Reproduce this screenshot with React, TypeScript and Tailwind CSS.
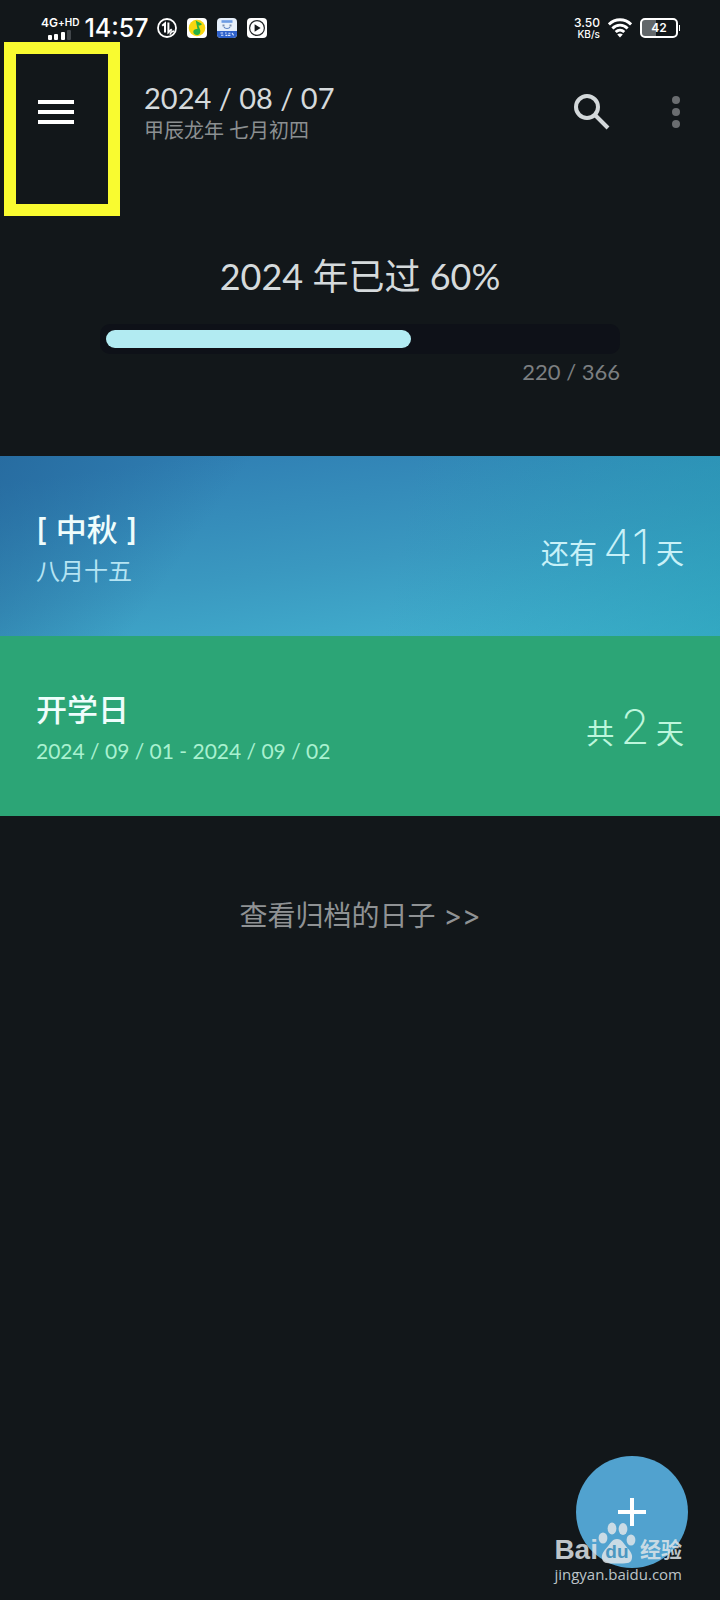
import { useState } from "react";
import clsx from "clsx";

type DayEvent = {
  id: string;
  title: string;
  date: string;
  prefix: string;
  days: number;
  cardClass: string;
  dateClass: string;
  countClass: string;
};

const EVENTS: DayEvent[] = [
  {
    id: "mid-autumn",
    title: "[ 中秋 ]",
    date: "八月十五",
    prefix: "还有",
    days: 41,
    cardClass:
      "bg-[linear-gradient(125deg,rgba(32,92,145,0.55),transparent_30%),linear-gradient(280deg,rgba(34,155,178,0.5),transparent_45%),linear-gradient(172deg,#3080b4_10%,#3a98c0_55%,#44b6d2_100%)]",
    dateClass: "text-[24px] text-[#b5e4f3]",
    countClass: "text-[#c8f1f8]",
  },
  {
    id: "school",
    title: "开学日",
    date: "2024 / 09 / 01 - 2024 / 09 / 02",
    prefix: "共",
    days: 2,
    cardClass: "bg-[#2ca576]",
    dateClass: "text-[21px] text-[#a9f1d0]",
    countClass: "text-[#bdf6dc]",
  },
];

const DAY_OF_YEAR = 220;
const DAYS_IN_YEAR = 366;

function SignalIcon() {
  return (
    <svg width="24" height="10" viewBox="0 0 24 10" fill="#fff">
      <rect x="0" y="5" width="4" height="5" rx="1" />
      <rect x="6" y="4" width="4" height="6" rx="1" />
      <rect x="13" y="2" width="4" height="8" rx="1" />
      <rect x="19" y="0" width="4" height="10" rx="1" fill="#41464a" />
    </svg>
  );
}

function DataIcon() {
  return (
    <svg width="20" height="20" viewBox="0 0 20 20" fill="none" stroke="#fff">
      <circle cx="10" cy="10" r="9" strokeWidth="1.8" />
      <path d="M5.200 7.800 8 5.400V14.500M11.400 4.600v9.600l3.400-3" strokeWidth="2" />
      <path d="M13 16.600c.5-2.200 2-3.400 4-3.600" strokeWidth="1.4" />
    </svg>
  );
}

function MusicIcon() {
  return (
    <svg width="20" height="20" viewBox="0 0 20 20">
      <rect width="20" height="20" rx="4" fill="#fff" />
      <circle cx="10" cy="10" r="8.3" fill="#f8d60f" />
      <path
        d="M8.600 1.800c.8 2 4.600 2.800 6.400 4.400-1.200 1.200-2.600 1.500-3.600 1.300l1.800 4.500c.7 3-1 5-3.200 5-2.200 0-3.800-1.400-3.700-3.300.1-2 2-3.100 4.200-2.700z"
        fill="#27b143"
      />
    </svg>
  );
}

function StudyIcon() {
  return (
    <svg width="20" height="20" viewBox="0 0 20 20">
      <rect width="20" height="20" rx="4" fill="#e6effa" />
      <path d="M0 13h20v3a4 4 0 0 1-4 4H4a4 4 0 0 1-4-4z" fill="#2f62cc" />
      <path d="M4.500 2.200h11v2.600h-11z" fill="#6d9be2" />
      <path d="M5.500 6.500h2v2h-2zM12.500 6.500h2v2h-2z" fill="#7c8fae" />
      <path d="M7 9c1 2 5 2 6 0" stroke="#5d83c2" strokeWidth="1.2" fill="none" />
      <path
        d="M3.500 15h2.600M4 17.300h2.400M8 15h1.600M8.400 17.400h2M11.400 15.200h2M11 17.400h2.400M15 15l1.600 2.400"
        stroke="#dbe8ff"
        strokeWidth="1.1"
      />
    </svg>
  );
}

function PlayIcon() {
  return (
    <svg width="20" height="20" viewBox="0 0 20 20">
      <rect width="20" height="20" rx="4" fill="#fff" />
      <circle cx="10" cy="10" r="7.4" fill="none" stroke="#23272a" strokeWidth="1.2" />
      <path d="M7.600 6.200v7.600l6-3.800z" fill="#15191c" />
    </svg>
  );
}

function WifiIcon() {
  return (
    <svg width="24" height="20" viewBox="0 0 24 20" fill="none" stroke="#fff" strokeWidth="2.9">
      <path d="M.9 6.400C7 .1 17 .1 23.100 6.400" />
      <path d="M4.400 10.400C8.700 6 15.300 6 19.600 10.400" />
      <path d="M7.700 14C10.200 11.600 13.800 11.600 16.300 14" />
      <path d="M12 19.400 9.200 16.500c1.600-1.500 4-1.500 5.600 0z" fill="#fff" stroke="none" />
    </svg>
  );
}

function StatusBar() {
  return (
    <div className="flex h-14 items-center justify-between pl-[41px] pr-10 font-['Inter',sans-serif] text-white">
      <div className="flex items-center gap-2">
        <div className="flex items-center gap-[5px]">
          <div className="flex flex-col items-center gap-px">
            <span className="flex items-start text-[12px] font-semibold leading-3">
              4G<sup className="top-0 text-[10px] leading-[10px]">+</sup>
              <span className="text-[10px] leading-[10px]">HD</span>
            </span>
            <SignalIcon />
          </div>
          <span className="text-[25px] font-medium leading-8">14:57</span>
        </div>
        <div className="flex items-center gap-[10px]">
          <DataIcon />
          <MusicIcon />
          <StudyIcon />
          <PlayIcon />
        </div>
      </div>
      <div className="flex items-center gap-2">
        <div className="text-right font-medium">
          <div className="text-[12px] leading-3">3.50</div>
          <div className="text-[10px] leading-[10px]">KB/s</div>
        </div>
        <WifiIcon />
        <div className="flex items-center gap-px">
          <div className="flex h-5 w-[38px] items-center justify-center rounded-[5px] border-2 border-white bg-[linear-gradient(90deg,#62676a_42%,transparent_42%)] text-[12px] font-semibold">
            42
          </div>
          <div className="h-[6px] w-px bg-white" />
        </div>
      </div>
    </div>
  );
}

function Header() {
  return (
    <header className="flex items-center pl-[38px] pr-10 pt-6">
      <button aria-label="菜单" className="cursor-pointer">
        <svg width="36" height="24" viewBox="0 0 36 24" fill="#fff">
          <path d="M0 0h36v4H0zM0 10h36v4H0zM0 20h36v4H0z" />
        </svg>
      </button>
      <div className="ml-[70px] grow">
        <h1 className="text-[29px] leading-9 text-[#d5dadc]">2024 / 08 / 07</h1>
        <p className="text-[20px] leading-7 text-[#8b8f91]">甲辰龙年 七月初四</p>
      </div>
      <button aria-label="搜索" className="cursor-pointer">
        <svg width="36" height="36" viewBox="0 0 36 36" fill="none" stroke="#d3d8da" strokeWidth="4">
          <circle cx="13" cy="13" r="11" />
          <path d="m21 21 13 13" />
        </svg>
      </button>
      <button aria-label="更多" className="ml-[62px] cursor-pointer">
        <svg width="8" height="32" viewBox="0 0 8 32" fill="#6a6d70">
          <circle cx="4" cy="4" r="4" />
          <circle cx="4" cy="16" r="4" />
          <circle cx="4" cy="28" r="4" />
        </svg>
      </button>
    </header>
  );
}

function YearProgress() {
  const ratio = DAY_OF_YEAR / DAYS_IN_YEAR;
  return (
    <section className="mx-[100px] flex flex-col pt-[110px] pb-[66px]">
      <h2 className="text-center text-[36px] leading-[44px] text-[#d5dadc]">
        2024 年已过 {Math.round(ratio * 100)}%
      </h2>
      <div
        role="progressbar"
        aria-label="今年进度"
        aria-valuenow={DAY_OF_YEAR}
        aria-valuemax={DAYS_IN_YEAR}
        className="mt-[26px] rounded-[10px] bg-[#0e1118] p-[6px]"
      >
        <div className="h-[18px] rounded-full bg-[#b2ebf2]" style={{ width: `${ratio * 100}%` }} />
      </div>
      <p className="text-right text-[22px] leading-9 text-[#7c7f81]">
        {DAY_OF_YEAR} / {DAYS_IN_YEAR}
      </p>
    </section>
  );
}

function EventCard({ event }: { event: DayEvent }) {
  return (
    <li className={clsx("flex h-[180px] items-center justify-between px-9 pt-2", event.cardClass)}>
      <div>
        <h3 className="font-['Inter','Noto_Sans_CJK_SC',sans-serif] text-[31px] font-medium leading-[42px] text-[#effdfc]">
          {event.title}
        </h3>
        <p className={clsx("leading-10", event.dateClass)}>{event.date}</p>
      </div>
      <p className={clsx("flex items-baseline gap-[6px] text-[28px] leading-[56px]", event.countClass)}>
        {event.prefix}
        <span className="font-['Inter',sans-serif] text-[48px] font-extralight">{event.days}</span>
        天
      </p>
    </li>
  );
}

function Watermark() {
  return (
    <div className="pointer-events-none absolute right-[38px] bottom-4 text-[#dfe5e9]/85">
      <div className="flex items-end font-['Liberation_Sans','Noto_Sans_CJK_SC',sans-serif] font-bold">
        <span className="text-[28px] leading-7">Bai</span>
        <div className="relative">
          <svg width="38" height="42" viewBox="0 0 38 42" fill="currentColor">
            <ellipse cx="5" cy="16" rx="4.400" ry="5.600" />
            <ellipse cx="14" cy="6.500" rx="4.400" ry="6" />
            <ellipse cx="25" cy="7" rx="4.400" ry="6" />
            <ellipse cx="33" cy="18" rx="4.400" ry="5.600" />
            <path d="M19 17c5 0 7 5 10.500 9 4.500 5 5.500 8 4 12-1.500 3.500-5 3.500-14.500 3.500S6 41.500 4.500 38c-1.500-4-.5-7 4-12C12 22 14 17 19 17z" />
          </svg>
          <span className="absolute inset-x-0 bottom-0 text-center text-[19px] leading-6 text-[#4b97c0]">du</span>
        </div>
        <span className="ml-1 text-[21px] leading-7">经验</span>
      </div>
      <div className="font-['Open_Sans',sans-serif] text-[15px] leading-5">jingyan.baidu.com</div>
    </div>
  );
}

export default function App() {
  const [events] = useState<DayEvent[]>(EVENTS);

  return (
    <div className="relative min-h-screen bg-[#12171a] font-['Lato','Noto_Sans_CJK_SC',sans-serif]">
      <StatusBar />
      <Header />
      <YearProgress />
      <ul>
        {events.map((event) => (
          <EventCard key={event.id} event={event} />
        ))}
      </ul>
      <div className="flex justify-center pt-20">
        <a
          href="#archive"
          className="font-['Inter','Noto_Sans_CJK_SC',sans-serif] text-[28px] leading-10 text-[#8f9294]"
        >
          查看归档的日子 &gt;&gt;
        </a>
      </div>

      {/* highlight around the menu button */}
      <div className="pointer-events-none absolute top-[42px] left-1 h-[174px] w-[116px] border-[12px] border-[#f9fb30]" />

      <button
        aria-label="新建"
        className="absolute right-8 bottom-8 flex size-28 cursor-pointer items-center justify-center rounded-full bg-[#51a2cf]"
      >
        <svg width="28" height="28" viewBox="0 0 28 28" fill="#fff">
          <path d="M12 0h4v12h12v4H16v12h-4V16H0v-4h12z" />
        </svg>
      </button>
      <Watermark />
    </div>
  );
}
